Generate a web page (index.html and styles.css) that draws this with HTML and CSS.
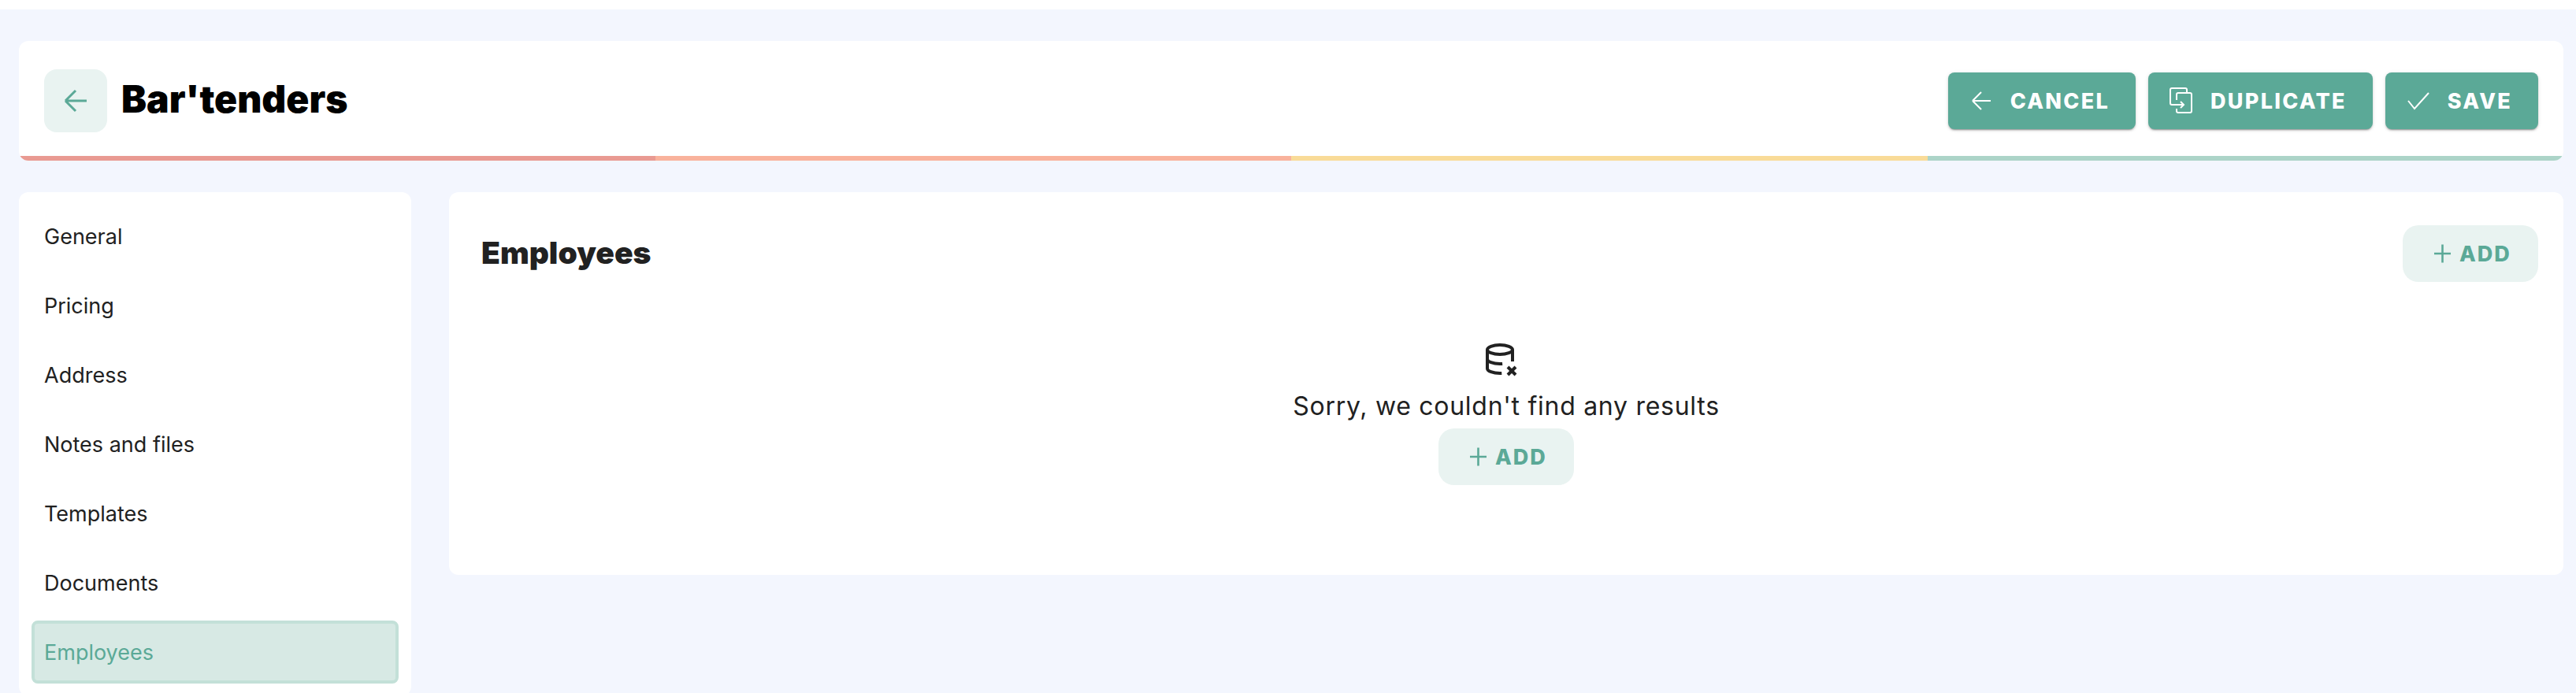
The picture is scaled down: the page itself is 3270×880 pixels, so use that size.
FILE: index.html
```html
<!DOCTYPE html>
<html lang="en">

<head>
    <meta charset="UTF-8">
    <meta name="viewport" content="width=device-width, initial-scale=1.0">
    <title>Bar'tenders</title>
    <link rel="stylesheet" href="styles.css">
</head>

<body>
    <div class="page">

        <header class="topCard">
            <div class="topRow">
                <div class="titleGroup">
                    <div class="backBtn">
                        <svg class="icon iconBack" width="32" height="32" viewBox="0 0 32 32">
                            <path d="M3 16h27M3 16L16 3M3 16l13 13" />
                        </svg>
                    </div>
                    <h1 class="title">Bar'tenders</h1>
                </div>
                <div class="actions">
                    <div class="btnAction">
                        <svg class="icon" width="32" height="32" viewBox="0 0 32 32">
                            <path d="M7 16h23M7 16L18 5M7 16l11 11" />
                        </svg>
                        <span>CANCEL</span>
                    </div>
                    <div class="btnAction">
                        <svg class="icon" width="32" height="36" viewBox="0 0 32 36">
                            <path d="M25 7V4q0-2-2-2H6Q4 2 4 4v17q0 2 2 2h15" />
                            <path d="M17 19l4 4-4 4" />
                            <path d="M12 17v-7q0-2 2-2h15q2 0 2 2v21q0 2-2 2H14q-2 0-2-2v-3" />
                        </svg>
                        <span>DUPLICATE</span>
                    </div>
                    <div class="btnAction">
                        <svg class="icon" width="32" height="32" viewBox="0 0 32 32">
                            <path d="M5 16l8 10L31 6" />
                        </svg>
                        <span>SAVE</span>
                    </div>
                </div>
            </div>
            <div class="progress">
                <div class="progressRed"></div>
                <div class="progressSalmon"></div>
                <div class="progressYellow"></div>
                <div class="progressGreen"></div>
            </div>
        </header>

        <div class="content">
            <nav class="sidebar">
                <div class="navItem">General</div>
                <div class="navItem">Pricing</div>
                <div class="navItem">Address</div>
                <div class="navItem">Notes and files</div>
                <div class="navItem">Templates</div>
                <div class="navItem">Documents</div>
                <div class="navItem navItemActive">Employees</div>
            </nav>

            <main class="panel">
                <div class="panelHead">
                    <h2 class="panelTitle">Employees</h2>
                    <div class="btnAdd">
                        <svg class="icon iconPlus" width="28" height="28" viewBox="0 0 28 28">
                            <path d="M14.5 2.5v23M4 14h21" />
                        </svg>
                        <span>ADD</span>
                    </div>
                </div>

                <div class="empty">
                    <svg class="emptyIcon" width="48" height="48" viewBox="0 0 24 24">
                        <path d="M4 6c0 1.657 3.582 3 8 3s8-1.343 8-3s-3.582-3-8-3s-8 1.343-8 3" />
                        <path d="M4 6v6c0 1.657 3.582 3 8 3c.537 0 1.062-.02 1.57-.058" />
                        <path d="M20 13.5V6" />
                        <path d="M4 12v6c0 1.657 3.582 3 8 3c.384 0 .762-.01 1.132-.03" />
                        <path d="M22 22l-5-5" />
                        <path d="M17 22l5-5" />
                    </svg>
                    <div class="emptyText">Sorry, we couldn't find any results</div>
                    <div class="btnAdd">
                        <svg class="icon iconPlus" width="28" height="28" viewBox="0 0 28 28">
                            <path d="M14.5 2.5v23M4 14h21" />
                        </svg>
                        <span>ADD</span>
                    </div>
                </div>
            </main>
        </div>

    </div>
</body>

</html>
```

FILE: styles.css
```css
html,
body {
    margin: 0;
    height: 880px;
    overflow: hidden;
    background-color: #FFF;
}

body {
    font-family: Inter, "Noto Sans", sans-serif;
    color: #212121;
}

.page {
    margin-top: 12px;
    padding: 40px 16px 0 24px;
    height: 868px;
    box-sizing: border-box;
    background-color: #F3F6FE;
}

.icon {
    fill: none;
    stroke: currentColor;
    stroke-width: 2;
    flex-shrink: 0;
}

.iconBack {
    stroke-width: 3;
}

.iconPlus {
    stroke-width: 2.6;
}

/* top card */
.topCard {
    background-color: #FFF;
    border-radius: 12px;
    overflow: hidden;
}

.topRow {
    display: flex;
    justify-content: space-between;
    align-items: center;
    height: 146px;
    padding: 6px 32px 0;
    box-sizing: border-box;
}

.titleGroup {
    display: flex;
    align-items: center;
    gap: 18px;
}

.backBtn {
    display: flex;
    align-items: center;
    justify-content: center;
    width: 80px;
    height: 80px;
    border-radius: 16px;
    background-color: #E9F3F1;
    color: #5BA997;
}

.title {
    margin: 0 0 6px;
    font-size: 48px;
    font-weight: 900;
    color: #000;
}

.actions {
    display: flex;
    gap: 16px;
}

.btnAction {
    display: flex;
    align-items: center;
    gap: 23px;
    height: 72px;
    padding: 0 33px 0 24px;
    border-radius: 8px;
    background-color: #5BA997;
    color: #FFF;
    font-size: 27px;
    font-weight: 800;
    letter-spacing: 2.3px;
    box-shadow: 0 3px 1px -2px rgba(0, 0, 0, .2), 0 2px 2px rgba(0, 0, 0, .14), 0 1px 5px rgba(0, 0, 0, .12);
}

.progress {
    display: flex;
    height: 6px;
}

.progress div {
    flex: 1;
}

.progressRed {
    background-color: #E99A92;
}

.progressSalmon {
    background-color: #F9B29C;
}

.progressYellow {
    background-color: #F9DB98;
}

.progressGreen {
    background-color: #ACD4C8;
}

/* sidebar and panel */
.content {
    display: flex;
    align-items: flex-start;
    gap: 48px;
    margin-top: 40px;
}

.sidebar {
    display: flex;
    flex-direction: column;
    gap: 8px;
    width: 498px;
    padding: 16px;
    box-sizing: border-box;
    background-color: #FFF;
    border-radius: 12px;
    flex-shrink: 0;
}

.navItem {
    display: flex;
    align-items: center;
    height: 80px;
    padding-left: 16px;
    border-radius: 8px;
    box-sizing: border-box;
    font-size: 27px;
}

.navItemActive {
    border: 4px solid #C3E0D8;
    padding-left: 12px;
    background-color: #D7E9E4;
    color: #5BA997;
}

.panel {
    flex: 1;
    height: 486px;
    padding: 42px 32px 0 41px;
    box-sizing: border-box;
    background-color: #FFF;
    border-radius: 12px;
}

.panelHead {
    display: flex;
    justify-content: space-between;
    align-items: center;
}

.panelTitle {
    margin: 0 0 3px;
    font-size: 39px;
    font-weight: 900;
}

.btnAdd {
    display: flex;
    align-items: center;
    gap: 8px;
    width: 172px;
    height: 72px;
    padding-left: 36px;
    box-sizing: border-box;
    border-radius: 20px;
    background-color: #E9F3F1;
    color: #5BA997;
    font-size: 27px;
    font-weight: 800;
    letter-spacing: 2px;
}

.empty {
    display: flex;
    flex-direction: column;
    align-items: center;
    margin-top: 74px;
    padding-right: 9px;
}

.emptyIcon {
    fill: none;
    stroke: #212121;
    stroke-width: 2;
    margin-right: 16px;
}

.emptyText {
    height: 64px;
    line-height: 72px;
    font-size: 32px;
    letter-spacing: .72px;
}
```
